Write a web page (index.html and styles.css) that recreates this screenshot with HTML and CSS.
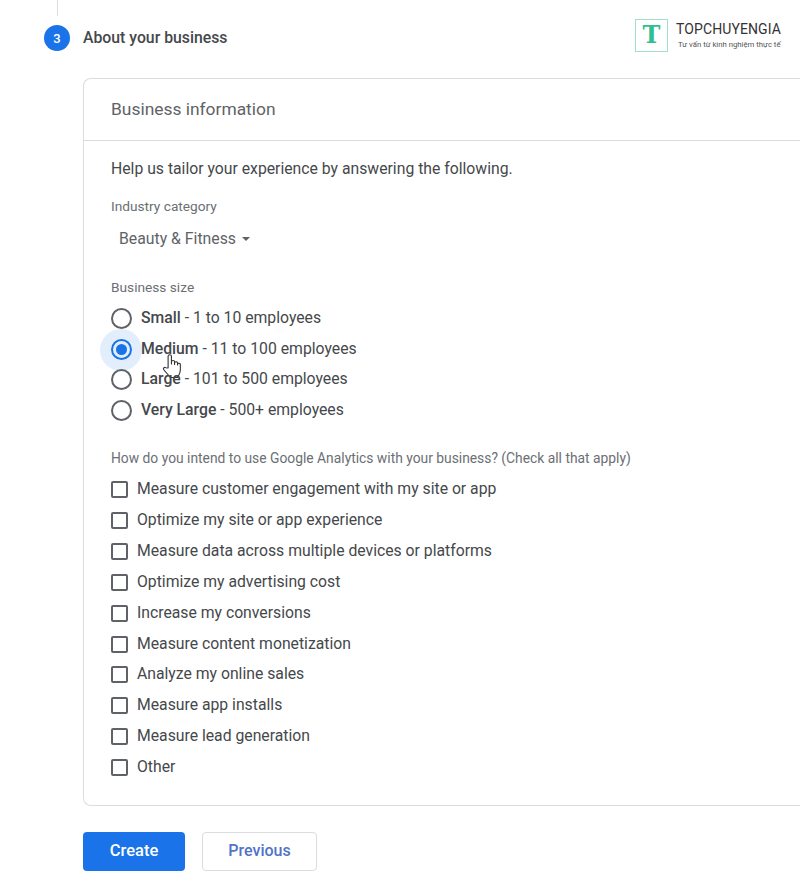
FILE: index.html
```html
<!DOCTYPE html>
<html lang="en">
<head>
  <meta charset="UTF-8" />
  <title>About your business</title>
  <link rel="stylesheet" href="styles.css">
</head>
<body>
  <div class="stem"></div>

  <div class="step">
    <div class="step-num">3</div>
    <div class="step-title">About your business</div>
    <div class="brand">
      <div class="brand-mark">T</div>
      <div class="brand-text">
        <div class="brand-name">TOPCHUYENGIA</div>
        <div class="brand-sub">Tư vấn từ kinh nghiệm thực tế</div>
      </div>
    </div>
  </div>

  <div class="card">
    <div class="card-head">Business information</div>
    <div class="card-body">
      <p class="intro">Help us tailor your experience by answering the following.</p>

      <div class="field-label">Industry category</div>
      <div class="select">Beauty &amp; Fitness <span class="caret"></span></div>

      <div class="field-label size-label">Business size</div>
      <div class="radios">
        <div class="radio-row"><span class="radio"></span><span class="radio-text"><b>Small</b> - 1 to 10 employees</span></div>
        <div class="radio-row"><span class="radio checked"></span><span class="radio-text"><b>Medium</b> - 11 to 100 employees</span>
          <svg class="cursor" width="20" height="26" viewBox="0 0 18 26" preserveAspectRatio="none">
            <path d="M5.500 15V3.200a1.500 1.500 0 0 1 3 0V11V8.800a1.400 1.400 0 0 1 2.800 0V11.500V9.800a1.400 1.400 0 0 1 2.700 0V12v-.800a1.300 1.300 0 0 1 2.500 0V17c0 3.500-1.800 6-2.500 7.500H7.500C6 22 3.500 19.500 1.500 16.500c-.8-1.300.6-2.700 1.800-1.800z" fill="#fff" stroke="#333" stroke-width="1" stroke-linejoin="round"/>
          </svg>
        </div>
        <div class="radio-row"><span class="radio"></span><span class="radio-text"><b>Large</b> - 101 to 500 employees</span></div>
        <div class="radio-row"><span class="radio"></span><span class="radio-text"><b>Very Large</b> - 500+ employees</span></div>
      </div>

      <div class="field-label use-label">How do you intend to use Google Analytics with your business? (Check all that apply)</div>
      <div class="checks">
        <div class="check-row"><span class="box"></span><span class="check-text">Measure customer engagement with my site or app</span></div>
        <div class="check-row"><span class="box"></span><span class="check-text">Optimize my site or app experience</span></div>
        <div class="check-row"><span class="box"></span><span class="check-text">Measure data across multiple devices or platforms</span></div>
        <div class="check-row"><span class="box"></span><span class="check-text">Optimize my advertising cost</span></div>
        <div class="check-row"><span class="box"></span><span class="check-text">Increase my conversions</span></div>
        <div class="check-row"><span class="box"></span><span class="check-text">Measure content monetization</span></div>
        <div class="check-row"><span class="box"></span><span class="check-text">Analyze my online sales</span></div>
        <div class="check-row"><span class="box"></span><span class="check-text">Measure app installs</span></div>
        <div class="check-row"><span class="box"></span><span class="check-text">Measure lead generation</span></div>
        <div class="check-row"><span class="box"></span><span class="check-text">Other</span></div>
      </div>
    </div>
  </div>

  <div class="actions">
    <button class="btn-primary">Create</button>
    <button class="btn-plain">Previous</button>
  </div>
</body>
</html>
```

FILE: styles.css
```css
* { box-sizing: border-box; }
html, body { height: 100%; }
body {
  margin: 0;
  padding: 0 0 0 44px;
  background: #fff;
  color: #45484b;
  font-family: Roboto, "Liberation Sans", sans-serif;
  font-size: 15.750px;
  overflow: hidden;
}
.stem {
  width: 1px; height: 16px;
  margin-left: 13px;
  background: #dadce0;
}
.step {
  display: flex; align-items: center;
  height: 26px; margin-top: 9px;
}
.step-num {
  width: 26px; height: 26px;
  border-radius: 50%;
  background: #1a73e8; color: #fff;
  font-size: 13px; font-weight: 500;
  display: flex; align-items: center; justify-content: center;
}
.step-title {
  margin-left: 13px;
  font-size: 15.800px; font-weight: 500;
  margin-top: -2px;
}
.brand {
  display: flex; align-items: center;
  margin-left: auto; margin-right: 19px;
  margin-top: -5px;
}
.brand-mark {
  width: 33px; height: 33px;
  border: 1px solid #9fe0cb;
  color: #2fbf93;
  font-family: "DejaVu Serif", serif;
  font-size: 24px; font-weight: 700; line-height: 30px;
  text-align: center;
}
.brand-text { margin-left: 8px; }
.brand-name {
  font-size: 14px; color: #333;
  letter-spacing: 0.1px; line-height: 15px;
}
.brand-sub {
  font-size: 7.750px; color: #555;
  line-height: 11px; margin-top: 2px;
  padding-left: 2px;
}
.card {
  height: 728px;
  margin: 27px 0 0 39px;
  border: 1px solid #dadce0;
  border-right: none;
  border-radius: 8px 0 0 8px;
}
.card-head {
  height: 62px;
  padding: 19px 0 0 27px;
  border-bottom: 1px solid #dadce0;
  font-size: 17.400px; color: #5f6368;
  line-height: 22px;
}
.card-body { padding: 18px 0 0 27px; }
.intro { margin: 0; line-height: 20px; }
.field-label {
  font-size: 13.700px; color: #6b6f73;
  line-height: 16px;
}
.intro + .field-label { margin-top: 19px; }
.select {
  display: flex; align-items: center;
  height: 24px; margin: 12px 0 0 8px;
  font-size: 15.800px; color: #5f6368;
}
.caret {
  margin-left: 6px; margin-top: 2px;
  border-top: 4px solid #5f6368;
  border-left: 4px solid transparent;
  border-right: 4px solid transparent;
}
.size-label { margin-top: 29px; }
.radios { margin-top: 8px; }
.radio-row {
  display: flex; align-items: center;
  height: 30.800px; position: relative;
}
.radio-text { margin-top: -2px; }
.radio-row b { font-weight: 500; }
.radio {
  width: 21px; height: 21px;
  border: 2px solid #5f6368; border-radius: 50%;
  margin-right: 9px; position: relative;
  flex: none;
}
.radio.checked { border-color: #1a73e8; }
.radio.checked::before {
  content: ""; position: absolute;
  left: -13px; top: -12px;
  width: 42px; height: 42px;
  border-radius: 50%;
  background: rgba(26, 115, 232, 0.12);
}
.radio.checked::after {
  content: ""; position: absolute;
  left: 3px; top: 3px;
  width: 11px; height: 11px;
  border-radius: 50%;
  background: #1a73e8;
}
.cursor { position: absolute; left: 51px; top: 19px; }
.use-label { margin-top: 24px; font-size: 13.830px; }
.checks { margin-top: 8px; }
.check-row {
  display: flex; align-items: center;
  height: 30.900px;
}
.check-text { margin-top: -2px; }
.box {
  width: 17px; height: 17px;
  border: 2px solid #5f6368; border-radius: 2px;
  margin-right: 9px; flex: none;
}
.actions {
  display: flex; align-items: flex-start; gap: 17px;
  margin: 26px 0 0 39px;
}
.actions button {
  font-family: inherit; font-size: 16.500px; font-weight: 500;
  border-radius: 4px;
  padding-bottom: 3px;
}
.btn-primary {
  width: 102px; height: 39px;
  background: #1a73e8; color: #fff;
  border: none;
}
.actions .btn-plain {
  width: 115px; height: 39px;
  background: #fff; color: #4f74c8;
  font-size: 16px;
  border: 1px solid #dadce0;
}
```
